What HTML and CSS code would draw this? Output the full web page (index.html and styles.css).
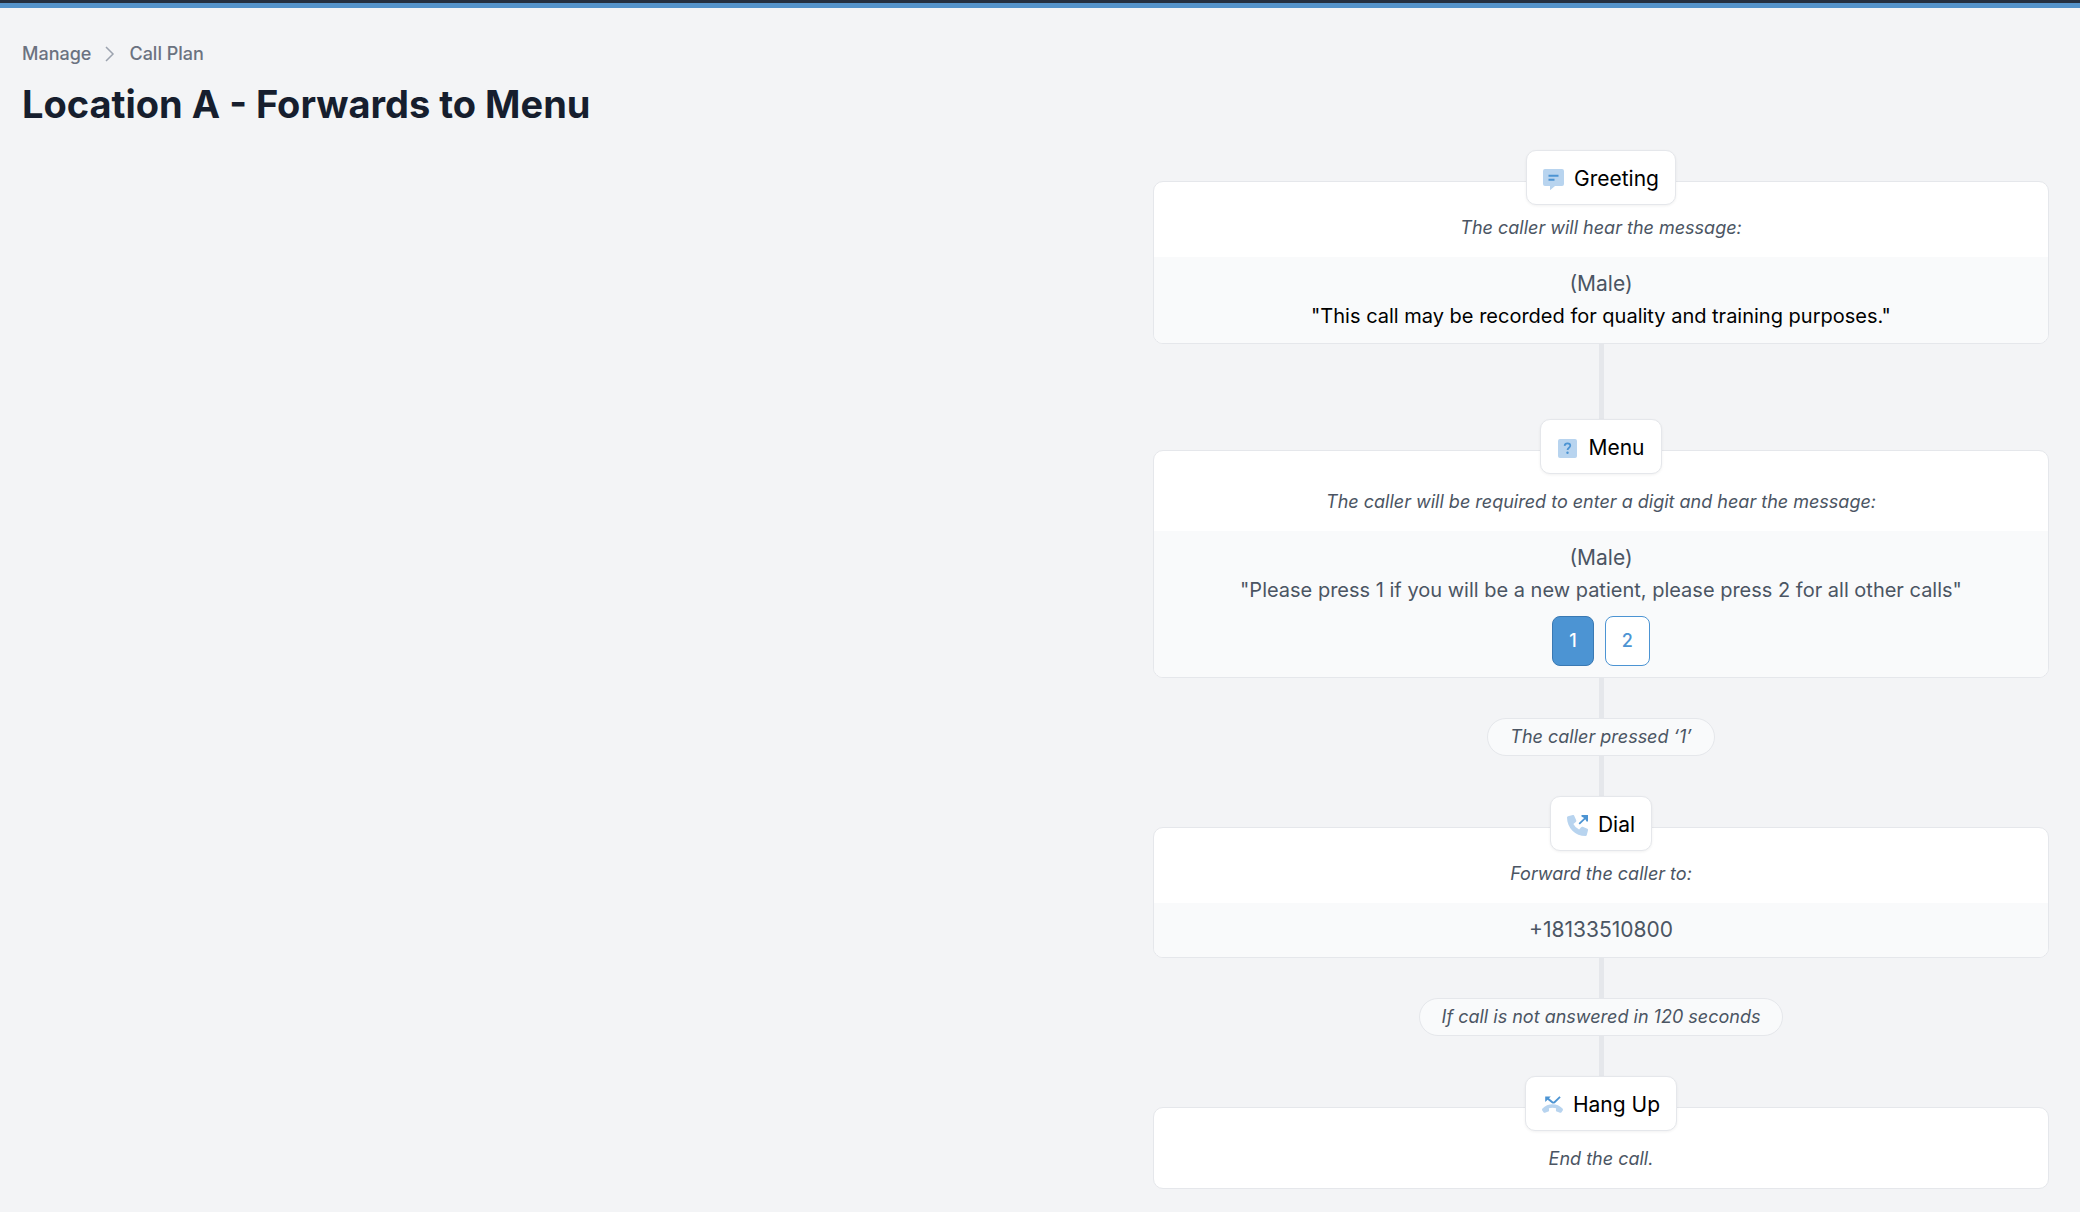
FILE: index.html
```html
<!DOCTYPE html>
<html lang="en">
<head>
    <title>Location A - Forwards to Menu</title>
    <meta charset="utf-8">
    <meta name="viewport" content="width=device-width, initial-scale=1">
    <link rel="stylesheet" href="styles.css">
</head>
<body>
    <div class="top-bar"></div>
    <header class="page-header">
        <nav class="breadcrumb" aria-label="Breadcrumb">
            <a href="#">Manage</a>
            <svg class="chevron" viewBox="0 0 10 16" aria-hidden="true"><path d="M1 1l7 7-7 7"/></svg>
            <a href="#">Call Plan</a>
        </nav>
        <h1>Location A - Forwards to Menu</h1>
    </header>

    <main class="flow">
        <section class="node">
            <h2 class="chip">
                <svg class="icon" viewBox="0 0 21 21" aria-hidden="true">
                    <path class="light" d="M2 0h17a2 2 0 0 1 2 2v13a2 2 0 0 1-2 2h-7l-4.400 3.800q-.6.400-.6-.4V17H2a2 2 0 0 1-2-2V2a2 2 0 0 1 2-2z"/>
                    <path class="line" d="M5.500 6.800h10M5.500 10.800h6"/>
                </svg>
                Greeting
            </h2>
            <div class="card">
                <p class="card-head">The caller will hear the message:</p>
                <div class="card-body">
                    <p>(Male)</p>
                    <p class="message strong">"This call may be recorded for quality and training purposes."</p>
                </div>
            </div>
        </section>
        <div class="connector long"></div>

        <section class="node">
            <h2 class="chip">
                <svg class="icon" viewBox="0 0 21 21" aria-hidden="true">
                    <rect class="light" x="1" y="1" width="19" height="19" rx="2"/>
                    <path class="line thin" d="M7.600 7.800C7.800 6 9 5.300 10.500 5.300c1.700 0 2.800.9 2.800 2.400 0 2-2.800 2.100-2.800 4.400"/>
                    <circle class="dark" cx="10.500" cy="14.800" r="1.200"/>
                </svg>
                Menu
            </h2>
            <div class="card">
                <p class="card-head tall">The caller will be required to enter a digit and hear the message:</p>
                <div class="card-body">
                    <p>(Male)</p>
                    <p class="message">"Please press 1 if you will be a new patient, please press 2 for all other calls"</p>
                    <div class="digits">
                        <button type="button" class="digit active" aria-pressed="true">1</button>
                        <button type="button" class="digit" aria-pressed="false">2</button>
                    </div>
                </div>
            </div>
        </section>
        <div class="connector"></div>
        <p class="pill">The caller pressed ‘1’</p>
        <div class="connector"></div>

        <section class="node">
            <h2 class="chip">
                <svg class="icon" viewBox="0 0 21 21" aria-hidden="true">
                    <path class="light" d="M1 1.200L5.800 0q1-.2 1.400.7l2 4.600q.4.900-.4 1.600L6.400 8.900q1.900 3.800 5.700 5.700l2-2.400q.7-.8 1.600-.4l4.600 2q.9.400.7 1.400l-1.200 4.800q-.3 1-1.200 1C8.300 21 0 12.700 0 2.400q0-1 1-1.200z"/>
                    <path class="dark" d="M14.500 0H21v6.500h-1.500L18.300 4.200l-5.500 5.300-1.200-1.200 5.500-5.300-2.600-1.500z"/>
                </svg>
                Dial
            </h2>
            <div class="card">
                <p class="card-head">Forward the caller to:</p>
                <div class="card-body">
                    <p>+18133510800</p>
                </div>
            </div>
        </section>
        <div class="connector"></div>
        <p class="pill">If call is not answered in 120 seconds</p>
        <div class="connector"></div>

        <section class="node">
            <h2 class="chip">
                <svg class="icon" viewBox="0 0 21 21" aria-hidden="true">
                    <path class="light" d="M.5 13.500C5.500 7.800 15.500 7.800 20.500 13.500q.8 1 .2 2l-1.200 1.700q-.6.800-1.500.5l-3.300-1.200q-.9-.4-.8-1.300l.2-1.900q-3.600-1.200-7.200 0l.2 1.900q.1.900-.8 1.300L3 17.700q-.9.300-1.500-.5L.3 15.500q-.6-1 .2-2z"/>
                    <path class="dark" d="M3.200 1.400h5.600L7 3.300l3.900 3.200q.5.300 1 0L17.400 1.200l1.300 1.300-5.600 5.400q-1.700 1.300-3.400 0L5.600 4.700 3.200 7z"/>
                </svg>
                Hang Up
            </h2>
            <div class="card">
                <p class="card-head tall">End the call.</p>
            </div>
        </section>
    </main>
</body>
</html>
```
FILE: styles.css
```css
* {
    box-sizing: border-box;
}
body {
    margin: 0;
    font-family: Inter, "Liberation Sans", sans-serif;
    font-size: 21px;
    line-height: 32px;
    color: #4b5563;
    background-color: #f3f4f6;
}
h1, h2, p {
    margin: 0;
}
.top-bar {
    height: 8px;
    background-color: #5593ca;
    border-top: 3px solid #252f3f;
}
.page-header {
    padding: 32px 22px 0;
}
.breadcrumb {
    display: flex;
    align-items: center;
    gap: 14px;
    font-size: 18px;
    font-weight: 500;
    line-height: 27px;
}
.breadcrumb a {
    color: #6b7280;
    text-decoration: none;
}
.chevron {
    width: 10px;
    height: 16px;
    fill: none;
    stroke: #9ca3af;
    stroke-width: 1.5;
}
h1 {
    padding-top: 13px;
    font-size: 38px;
    font-weight: 700;
    line-height: 48px;
    color: #161e2e;
}
.flow {
    display: flex;
    flex-direction: column;
    align-items: center;
    max-width: 896px;
    margin: 22px 31px 24px auto;
    text-align: center;
}
.node {
    display: flex;
    flex-direction: column;
    align-items: center;
    width: 100%;
}
.chip {
    display: flex;
    align-items: center;
    gap: 10px;
    margin-bottom: -24px;
    padding: 12px 16px 9px;
    font-size: 21px;
    font-weight: 400;
    color: #000;
    background-color: #fff;
    border: 1px solid #e5e7eb;
    border-radius: 10px;
    box-shadow: 0 1px 3px rgba(0, 0, 0, 0.06);
    z-index: 1;
}
.icon {
    width: 21px;
    height: 21px;
}
.icon .light {
    fill: #b8d4ef;
}
.icon .dark {
    fill: #4c94d3;
}
.icon .line {
    fill: none;
    stroke: #4c94d3;
    stroke-width: 2;
}
.icon .thin {
    stroke-width: 1.7;
}
.card {
    width: 100%;
    background-color: #fff;
    border: 1px solid #e5e7eb;
    border-radius: 10px;
    overflow: hidden;
}
.card-head {
    padding: 32px 16px 16px;
    font-size: 18px;
    font-style: italic;
    line-height: 27px;
}
.card-head.tall {
    padding-top: 37px;
}
.card-body {
    padding: 11px 16px;
    background-color: #f9fafb;
}
.message {
    font-size: 20px;
}
.strong {
    color: #000;
}
.digits {
    display: flex;
    justify-content: center;
    gap: 11px;
    padding-top: 10px;
}
.digit {
    padding: 10px 16px;
    font-family: inherit;
    font-size: 18px;
    font-weight: 500;
    line-height: 28px;
    color: #4c94d3;
    background-color: #fff;
    border: 1px solid #4c94d3;
    border-radius: 8px;
    cursor: pointer;
}
.digit.active {
    color: #fff;
    background-color: #4c94d3;
    border-color: #3a79b3;
}
.connector {
    width: 5px;
    height: 40px;
    background-color: #e5e7eb;
}
.connector.long {
    height: 75px;
}
.pill {
    padding: 4px 22px;
    font-size: 18px;
    font-style: italic;
    line-height: 28px;
    background-color: #f9fafb;
    border: 1px solid #e5e7eb;
    border-radius: 20px;
}
```
